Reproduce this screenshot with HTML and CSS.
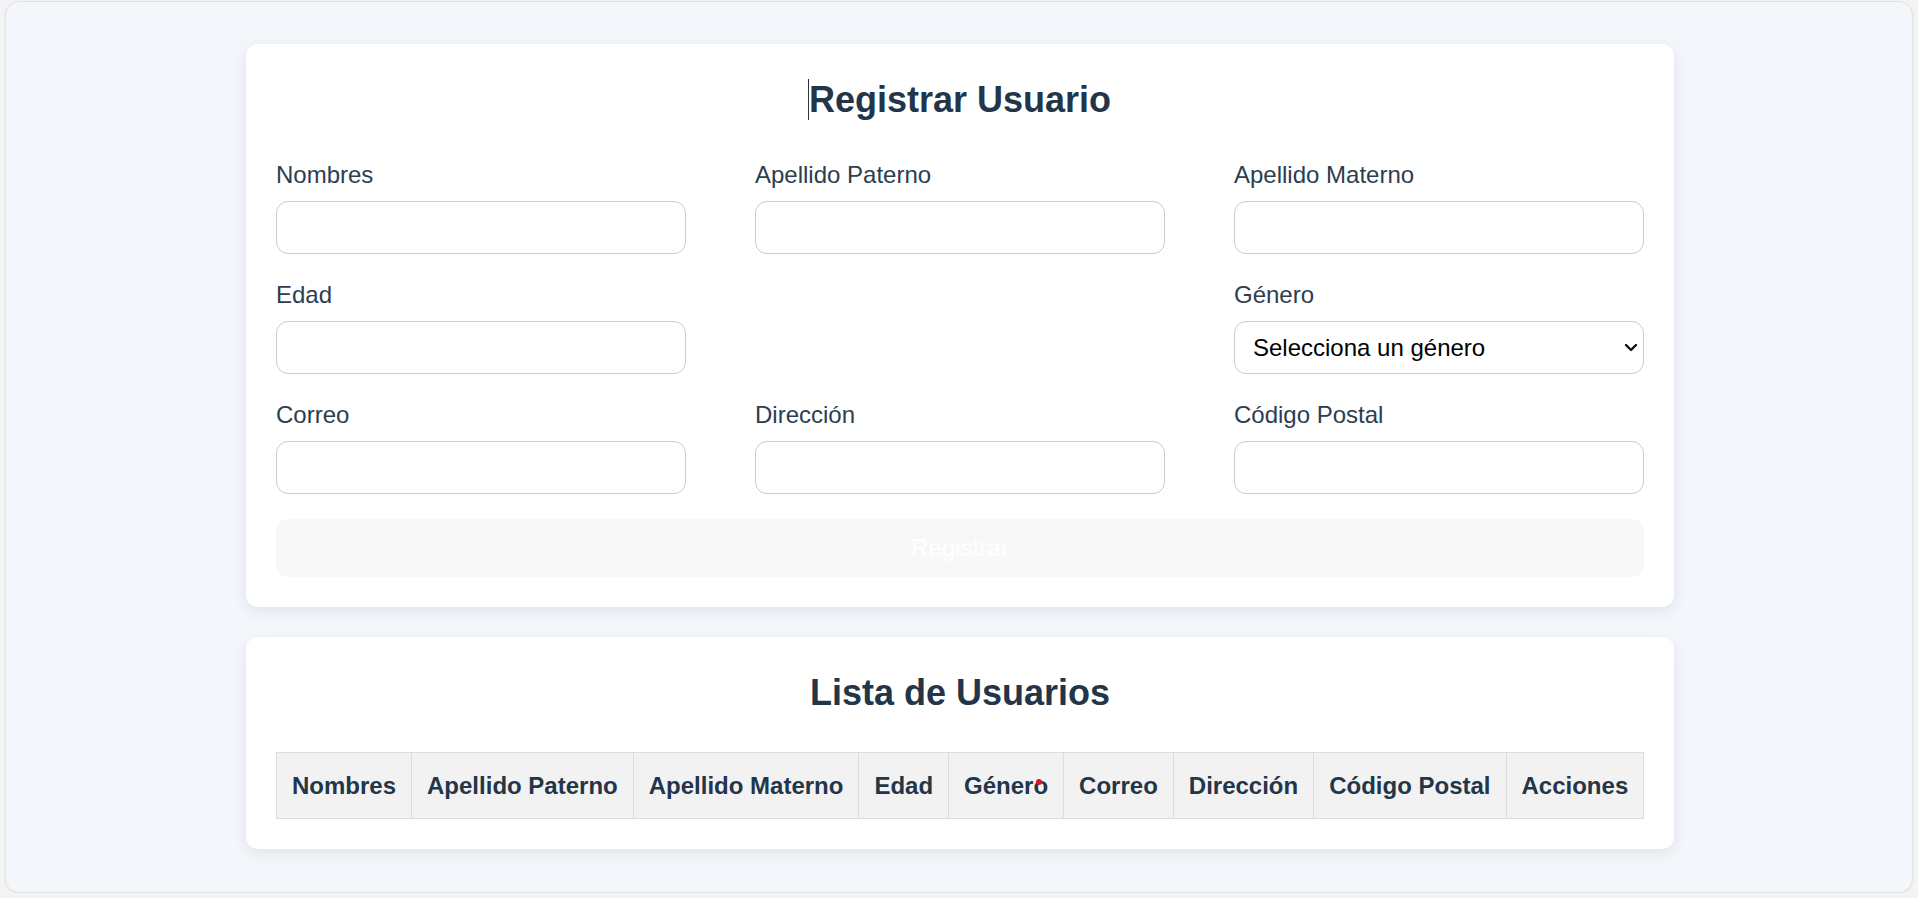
FILE: index.html
```html
<!DOCTYPE html>
<html lang="es">
<head>
<meta charset="utf-8">
<title>Registro de Usuarios</title>
<link rel="stylesheet" href="styles.css">
</head>
<body>
<div class="app">
  <section class="card form-card">
    <h2 class="card-title"><span class="caret-wrap">Registrar Usuario</span></h2>
    <form class="form-grid">
      <div class="field">
        <label class="field-label">Nombres</label>
        <input class="field-input" type="text">
      </div>
      <div class="field">
        <label class="field-label">Apellido Paterno</label>
        <input class="field-input" type="text">
      </div>
      <div class="field">
        <label class="field-label">Apellido Materno</label>
        <input class="field-input" type="text">
      </div>
      <div class="field">
        <label class="field-label">Edad</label>
        <input class="field-input" type="text">
      </div>
      <div class="field field-empty"></div>
      <div class="field">
        <label class="field-label">Género</label>
        <div class="select-wrap">
          <select class="field-input field-select">
            <option>Selecciona un género</option>
          </select>
          <svg class="select-arrow" width="14" height="9" viewBox="0 0 14 9"><path d="M2 2 L7 7 L12 2" fill="none" stroke="#111" stroke-width="2.4" stroke-linecap="round" stroke-linejoin="round"/></svg>
        </div>
      </div>
      <div class="field">
        <label class="field-label">Correo</label>
        <input class="field-input" type="text">
      </div>
      <div class="field">
        <label class="field-label">Dirección</label>
        <input class="field-input" type="text">
      </div>
      <div class="field">
        <label class="field-label">Código Postal</label>
        <input class="field-input" type="text">
      </div>
    </form>
    <button class="submit-btn" type="button">Registrar</button>
  </section>

  <section class="card list-card">
    <h2 class="card-title">Lista de Usuarios</h2>
    <table class="users-table">
      <thead>
        <tr>
          <th>Nombres</th>
          <th>Apellido Paterno</th>
          <th>Apellido Materno</th>
          <th>Edad</th>
          <th><span class="dot-wrap">Género<span class="red-dot"></span></span></th>
          <th>Correo</th>
          <th>Dirección</th>
          <th>Código Postal</th>
          <th>Acciones</th>
        </tr>
      </thead>
      <tbody></tbody>
    </table>
  </section>
</div>
</body>
</html>
```

FILE: styles.css
```css
* {
  box-sizing: border-box;
}

html, body {
  margin: 0;
  padding: 0;
  background: #f4f4f4;
}

body {
  font-family: "Liberation Sans", Arial, sans-serif;
  color: #2c3e50;
  padding: 1px 5px 0;
}

.app {
  height: 892px;
  background: #f3f6fa;
  border: 1px solid #e3e3e3;
  border-radius: 14px;
  box-shadow: 0 1px 3px rgba(0, 0, 0, 0.06);
  padding-top: 42px;
  display: flex;
  flex-direction: column;
  align-items: center;
  gap: 30px;
}

.card {
  width: 1428px;
  margin-left: 2px;
  background: #ffffff;
  border-radius: 12px;
  box-shadow: 0 4px 14px rgba(30, 40, 60, 0.09);
  padding: 35px 30px 30px;
}

.card-title {
  margin: 0;
  font-size: 36px;
  line-height: 41px;
  font-weight: bold;
  text-align: center;
  color: #233549;
}

.form-card .card-title {
  margin-bottom: 41px;
}

.list-card .card-title {
  margin-bottom: 39px;
}

.caret-wrap {
  position: relative;
}

.caret-wrap::before {
  content: "";
  position: absolute;
  left: -1px;
  top: 0;
  width: 1px;
  height: 41px;
  background: #2a3340;
}

.form-grid {
  display: grid;
  grid-template-columns: 410px 410px 410px;
  justify-content: space-between;
  row-gap: 27px;
}

.field-label {
  display: block;
  font-size: 24px;
  line-height: 28px;
  margin-bottom: 12px;
  color: #2c3e50;
}

.field-input {
  display: block;
  width: 100%;
  height: 53px;
  border: 1px solid #cccccc;
  border-radius: 12px;
  background: #ffffff;
  font-family: "Liberation Sans", Arial, sans-serif;
  font-size: 24px;
  padding: 0 18px;
  color: #000;
  outline: none;
}

.field-empty {
  height: 93px;
}

.select-wrap {
  position: relative;
}

.field-select {
  appearance: none;
  -webkit-appearance: none;
}

.select-arrow {
  position: absolute;
  right: 6px;
  top: 22px;
  pointer-events: none;
}

.submit-btn {
  display: block;
  width: 100%;
  height: 58px;
  margin-top: 25px;
  border: none;
  border-radius: 12px;
  background: #f8f8f8;
  color: #ffffff;
  font-family: "Liberation Sans", Arial, sans-serif;
  font-size: 24px;
}

.users-table {
  width: 100%;
  border-collapse: collapse;
}

.users-table th {
  border: 1px solid #dddddd;
  background: #f2f2f2;
  padding: 18px 15px;
  font-size: 24px;
  line-height: 29px;
  font-weight: bold;
  color: #233549;
  white-space: nowrap;
}

.dot-wrap {
  position: relative;
}

.red-dot {
  position: absolute;
  right: 6px;
  top: 7px;
  width: 6px;
  height: 6px;
  border-radius: 50%;
  background: #e3151a;
}
```
